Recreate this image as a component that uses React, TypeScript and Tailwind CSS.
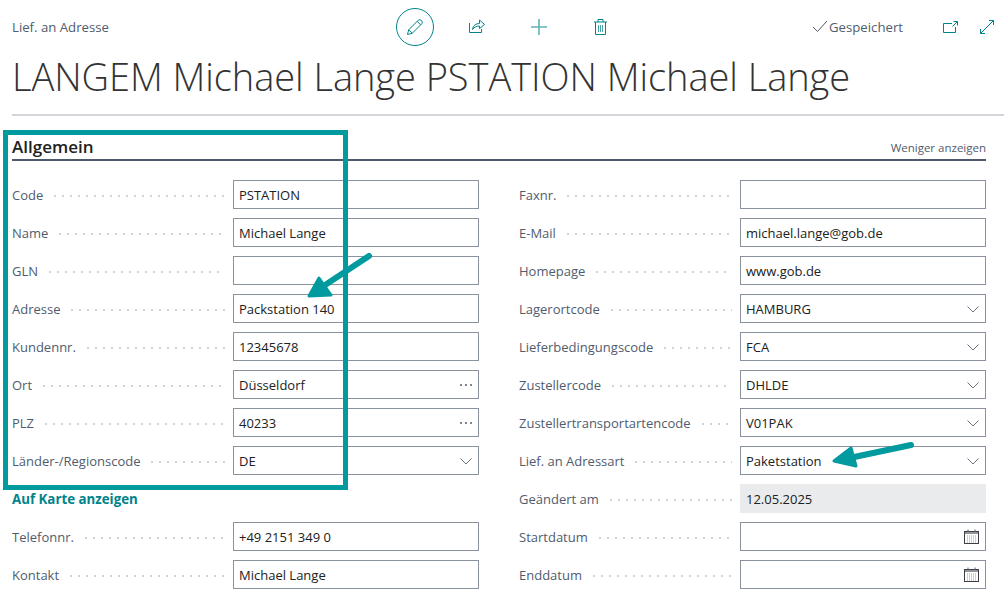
import React from "react";

const font = { fontFamily: '"Open Sans", "Noto Sans", sans-serif' };

function Chevron() {
  return (
    <svg width="14" height="8" viewBox="0 0 14 8" fill="none" stroke="#6b7482" strokeWidth="1" className="shrink-0 mt-[1px]">
      <path d="M1.5 1.5 L7 7 L12.5 1.5" />
    </svg>
  );
}

function Calendar() {
  return (
    <svg width="15" height="15" viewBox="0 0 15 15" fill="none" className="shrink-0 mr-[1px]">
      <rect x="0.5" y="2.5" width="14" height="12" stroke="#3a3f47" fill="white" />
      <rect x="1" y="3" width="13" height="2" fill="#8f9399" />
      <path d="M4 0.5v2.5M11 0.5v2.5" stroke="#5a5f68" />
      <path d="M3 7h9M3 9h9M3 11h9M3 13h9" stroke="#9a9ea6" strokeDasharray="1 1" />
    </svg>
  );
}

function Ellipsis() {
  return <span className="flex gap-[3px] shrink-0 pr-[1px]">
    <i className="block w-[2px] h-[2px] rounded-full bg-[#505c6d]" />
    <i className="block w-[2px] h-[2px] rounded-full bg-[#505c6d]" />
    <i className="block w-[2px] h-[2px] rounded-full bg-[#505c6d]" />
  </span>;
}

type F = { label: string; value?: string; kind?: "text" | "select" | "lookup" | "date" | "readonly" };

function Field({ label, value = "", kind = "text" }: F) {
  const box = kind === "readonly"
    ? "bg-[#eaebec] border-[#eaebec]"
    : "bg-white border-[#8a919f]";
  return (
    <div className="flex items-center h-[29px]">
      <div className="flex items-center w-[221px] pr-[8px] shrink-0 overflow-hidden">
        <span className="text-[13px] pt-[2px] text-[#505c6d] whitespace-nowrap">{label}</span>
        <span className="flex-1 ml-[8px] h-[2px] mt-[2px] bg-[radial-gradient(circle,#d0d3d7_1px,transparent_1px)] bg-[length:8px_2px] bg-left" />
      </div>
      <div className={`w-[246px] h-[29px] border ${box} flex items-center justify-between pl-[5px] pr-[5px]`}>
        <span className="text-[13px] pt-[2px] text-[#212121] whitespace-nowrap">{value}</span>
        {kind === "select" && <Chevron />}
        {kind === "lookup" && <Ellipsis />}
        {kind === "date" && <Calendar />}
      </div>
    </div>
  );
}

const left1: F[] = [
  { label: "Code", value: "PSTATION" },
  { label: "Name", value: "Michael Lange" },
  { label: "GLN" },
  { label: "Adresse", value: "Packstation 140" },
  { label: "Kundennr.", value: "12345678" },
  { label: "Ort", value: "Düsseldorf", kind: "lookup" },
  { label: "PLZ", value: "40233", kind: "lookup" },
  { label: "Länder-/Regionscode", value: "DE", kind: "select" },
];
const left2: F[] = [
  { label: "Telefonnr.", value: "+49 2151 349 0" },
  { label: "Kontakt", value: "Michael Lange" },
];
const right: F[] = [
  { label: "Faxnr." },
  { label: "E-Mail", value: "michael.lange@gob.de" },
  { label: "Homepage", value: "www.gob.de" },
  { label: "Lagerortcode", value: "HAMBURG", kind: "select" },
  { label: "Lieferbedingungscode", value: "FCA", kind: "select" },
  { label: "Zustellercode", value: "DHLDE", kind: "select" },
  { label: "Zustellertransportartencode", value: "V01PAK", kind: "select" },
  { label: "Lief. an Adressart", value: "Paketstation", kind: "select" },
  { label: "Geändert am", value: "12.05.2025", kind: "readonly" },
  { label: "Startdatum", kind: "date" },
  { label: "Enddatum", kind: "date" },
];

const teal = "#00838a";

export default function App() {
  return (
    <div style={font} className="relative w-[1004px] h-[601px] overflow-hidden bg-white">
      <header className="flex items-center h-[54px] pl-[12px] pr-[10px]">
        <div className="w-[384px] text-[13.2px] pt-[2px] text-[#505c6d]">Lief. an Adresse</div>
        <div className="flex items-center">
          <div className="w-[38px] h-[38px] rounded-full border border-[#008489] flex items-center justify-center">
            <svg width="16" height="16" viewBox="0 0 16 16" fill="none" stroke={teal} strokeWidth="1" strokeLinejoin="round">
              <path d="M0.5 15.5 L1.7 10.8 L11.3 1.2 Q12.8 0 14.5 1.5 Q16 3.2 14.8 4.7 L5.2 14.3 Z M1.7 10.8 L5.2 14.3 M10.2 2.4 L13.6 5.8" />
            </svg>
          </div>
          <svg className="ml-[35px] -mt-[2px]" width="16" height="14" viewBox="0 0 16 14" fill="none" stroke={teal} strokeWidth="1" strokeLinejoin="round">
            <path d="M0.5 4 V13.5 H12.5 V10 M3.5 10.5 C4 6.5 7 4.5 10.5 4.5 V1 L15.5 5.5 L10.5 9.5 V7 C8 7 5 7.8 3.5 10.5 Z" />
          </svg>
          <svg className="ml-[46px]" width="16" height="16" viewBox="0 0 16 16" fill="none" stroke="#5fb3b7" strokeWidth="1.6">
            <path d="M0 8 H16 M8 0 V16" />
          </svg>
          <svg className="ml-[47px]" width="13" height="16" viewBox="0 0 13 16" fill="none" stroke={teal} strokeWidth="1">
            <path d="M0 3 H13 M4 3 V0.5 H9 V3 M1.5 3 V15.5 H11.5 V3" />
            <path d="M4.5 6 V13 M6.5 6 V13 M8.5 6 V13" stroke="#4aa5aa" />
          </svg>
        </div>
        <div className="ml-auto flex items-center">
          <svg width="16" height="13" viewBox="0 0 16 13" fill="none" stroke="#505c6d" strokeWidth="1">
            <path d="M1 7 L5.5 11.5 L15 1" />
          </svg>
          <span className="ml-[1px] text-[13.2px] pt-[2px] text-[#505c6d]">Gespeichert</span>
          <svg className="ml-[40px]" width="15" height="12" viewBox="0 0 15 12" fill="none" stroke={teal} strokeWidth="1">
            <path d="M9 2.5 H0.5 V11.5 H12.5 V6 M10.5 0.5 H14.5 V4.5 M14.5 0.5 L9.5 5.5" />
          </svg>
          <svg className="ml-[22px]" width="14" height="14" viewBox="0 0 14 14" fill="none" stroke={teal} strokeWidth="1">
            <path d="M13.5 0.5 L0.5 13.5 M9 0.5 H13.5 V5 M0.5 9 V13.5 H5" />
          </svg>
        </div>
      </header>

      <h1 className="pl-[12px] h-[44px] text-[38px] leading-[44px] font-light text-[#333333] whitespace-nowrap tracking-[-0.05px]">
        LANGEM Michael Lange PSTATION Michael Lange
      </h1>

      <div className="mt-[16px] ml-[12px] h-[2px] bg-[#d2d6da]" />

      <section className="ml-[12px] mr-[18px] mt-[19px]">
        <div className="flex items-end justify-between h-[26px] border-b-2 border-[#4e5a6b] pb-[3px]">
          <h2 className="text-[17px] leading-[18px] font-semibold text-[#212121]">Allgemein</h2>
          <span className="text-[11.5px] text-[#505c6d]">Weniger anzeigen</span>
        </div>
        <div className="flex justify-between mt-[19px]">
          <div className="w-[467px] flex flex-col gap-[9px]">
            {left1.map((f) => <Field key={f.label} {...f} />)}
            <div className="h-[29px] pt-[2px] flex items-center text-[13.3px] font-bold text-[#00838a]">Auf Karte anzeigen</div>
            {left2.map((f) => <Field key={f.label} {...f} />)}
          </div>
          <div className="w-[467px] flex flex-col gap-[9px]">
            {right.map((f) => <Field key={f.label} {...f} />)}
          </div>
        </div>
      </section>

      {/* annotation overlays */}
      <div className="absolute left-[3px] top-[130px] w-[345px] h-[360px] border-[5px] border-[#009a9f] pointer-events-none" />
      <svg className="absolute left-0 top-0 pointer-events-none" width="1004" height="601" fill="none" stroke="#009a9f" strokeLinecap="round" strokeLinejoin="round">
        <path d="M369 256 L313 293" strokeWidth="6" />
        <path d="M319 278 L309 296 L331 295 Z" strokeWidth="3" fill="#009a9f" />
        <path d="M911 445 L840 460" strokeWidth="6" />
        <path d="M851 448 L834 461 L856 466 Z" strokeWidth="3" fill="#009a9f" />
      </svg>
    </div>
  );
}
